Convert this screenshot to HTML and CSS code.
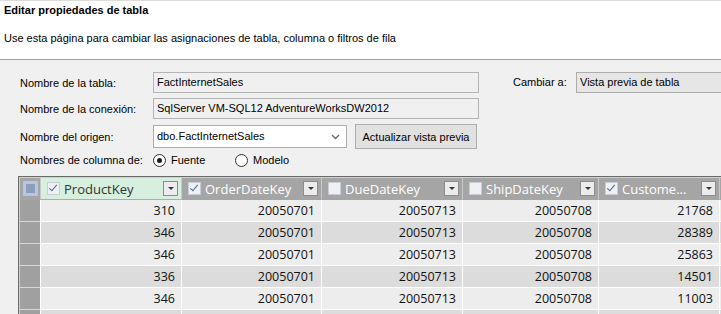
FILE: index.html
```html
<!DOCTYPE html>
<html lang="es">
<head>
    <meta charset="UTF-8">
    <title>Editar propiedades de tabla</title>
    <link rel="stylesheet" href="styles.css">
</head>
<body>
    <div class="header">
        <div class="title">Editar propiedades de tabla</div>
        <div class="subtitle">Use esta página para cambiar las asignaciones de tabla, columna o filtros de fila</div>
    </div>

    <div class="form">
        <div class="fields">
            <div class="row">
                <span class="lbl">Nombre de la tabla:</span>
                <div class="box wide">FactInternetSales</div>
            </div>
            <div class="row">
                <span class="lbl">Nombre de la conexión:</span>
                <div class="box wide">SqlServer VM-SQL12 AdventureWorksDW2012</div>
            </div>
            <div class="row tall">
                <span class="lbl">Nombre del origen:</span>
                <div class="box combo">
                    <span>dbo.FactInternetSales</span>
                    <svg class="chev" width="9" height="6" viewBox="0 0 9 6"><path d="M1 1 L4.5 4.5 L8 1" fill="none" stroke="#666" stroke-width="1.3"/></svg>
                </div>
                <button class="btn">Actualizar vista previa</button>
            </div>
            <div class="row radios">
                <span class="lbl">Nombres de columna de:</span>
                <span class="radio on"></span><span class="rtext">Fuente</span>
                <span class="radio"></span><span class="rtext">Modelo</span>
            </div>
        </div>
        <div class="switch">
            <span class="lbl">Cambiar a:</span>
            <div class="box select">Vista previa de tabla</div>
        </div>
    </div>

    <div class="grid-wrap">
        <table class="grid">
            <thead>
                <tr>
                    <th class="corner"><span class="all"></span></th>
                    <th class="c1 active"><div class="hd"><span class="chk on"></span><span class="name">ProductKey</span><span class="dd"></span></div></th>
                    <th class="c2"><div class="hd"><span class="chk on"></span><span class="name">OrderDateKey</span><span class="dd"></span></div></th>
                    <th class="c3"><div class="hd"><span class="chk"></span><span class="name">DueDateKey</span><span class="dd"></span></div></th>
                    <th class="c4"><div class="hd"><span class="chk"></span><span class="name">ShipDateKey</span><span class="dd"></span></div></th>
                    <th class="c5"><div class="hd"><span class="chk on"></span><span class="name">Custome...</span><span class="dd"></span></div></th>
                    <th class="c6"></th>
                </tr>
            </thead>
            <tbody>
                <tr><td class="sel"></td><td>310</td><td>20050701</td><td>20050713</td><td>20050708</td><td>21768</td><td></td></tr>
                <tr><td class="sel"></td><td>346</td><td>20050701</td><td>20050713</td><td>20050708</td><td>28389</td><td></td></tr>
                <tr><td class="sel"></td><td>346</td><td>20050701</td><td>20050713</td><td>20050708</td><td>25863</td><td></td></tr>
                <tr><td class="sel"></td><td>336</td><td>20050701</td><td>20050713</td><td>20050708</td><td>14501</td><td></td></tr>
                <tr><td class="sel"></td><td>346</td><td>20050701</td><td>20050713</td><td>20050708</td><td>11003</td><td></td></tr>
                <tr><td class="sel"></td><td></td><td></td><td></td><td></td><td></td><td></td></tr>
            </tbody>
        </table>
    </div>
</body>
</html>
```

FILE: styles.css
```css
body {
    margin: 0;
    background: #f0f0f0;
    font-family: 'Liberation Sans', Arial, sans-serif;
    font-size: 11px;
    color: #000;
    overflow: hidden;
    width: 721px;
    height: 314px;
}

.header {
    height: 58px;
    background: #fff;
    border-top: 1px solid #dcdcdc;
    border-bottom: 1px solid #a0a0a0;
    padding-left: 4px;
}

.title {
    font-weight: bold;
    line-height: 16px;
    margin-top: 1px;
}

.subtitle {
    line-height: 16px;
    margin-top: 12px;
}

.form {
    display: flex;
    padding: 12px 0 0 20px;
    height: 104px;
}

.fields {
    width: 493px;
    flex: none;
}

.row {
    display: flex;
    align-items: center;
    height: 21px;
    margin-bottom: 5px;
}

.row.tall {
    height: 25px;
    margin-bottom: 3px;
}

.lbl {
    width: 133px;
    flex: none;
    white-space: nowrap;
}

.box {
    height: 19px;
    line-height: 19px;
    border: 1px solid #b4b4b4;
    background: #f0f0f0;
    padding-left: 3px;
    box-sizing: content-box;
    white-space: nowrap;
}

.wide {
    width: 321px;
}

.combo {
    width: 187px;
    height: 21px;
    line-height: 21px;
    background: #fff;
    border-color: #adadad;
    display: flex;
    justify-content: space-between;
    align-items: center;
    padding-right: 2px;
}

.chev {
    margin-right: 4px;
}

.btn {
    margin-left: 8px;
    height: 25px;
    width: 122px;
    padding: 0;
    border: 1px solid #adadad;
    background: #e1e1e1;
    font-family: inherit;
    font-size: 11px;
    color: #000;
}

.radios {
    height: 16px;
}

.radio {
    width: 11px;
    height: 11px;
    border: 1px solid #333;
    border-radius: 50%;
    background: #fff;
    position: relative;
    flex: none;
}

.radio.on::after {
    content: '';
    position: absolute;
    left: 3px;
    top: 3px;
    width: 5px;
    height: 5px;
    border-radius: 50%;
    background: #1a1a1a;
}

.rtext {
    margin-left: 5px;
    width: 64px;
}

.switch {
    display: flex;
    align-items: flex-start;
    height: 21px;
}

.switch .lbl {
    width: 63px;
    line-height: 21px;
}

.select {
    width: 200px;
    background: #e6e6e6;
    border-color: #acacac;
}

.grid-wrap {
    margin-left: 18px;
    border-top: 1px solid #6a6a6a;
    border-left: 1px solid #6a6a6a;
    padding: 1px 0 0 1px;
    background: #d0d0d0;
    width: 720px;
}

.grid {
    width: 720px;
    border-collapse: separate;
    border-spacing: 0;
    table-layout: fixed;
    font-family: 'Open Sans', sans-serif;
    font-size: 13px;
}

.grid th,
.grid td {
    border-right: 1px solid #fff;
    border-bottom: 1px solid #fff;
    padding: 0;
    white-space: nowrap;
    overflow: hidden;
}

.grid th {
    height: 21px;
    background: #a5a5a5;
    color: #fff;
    font-weight: normal;
    text-align: left;
    border-right-color: #c8c8c8;
    border-bottom-color: #a5a5a5;
}

.grid th.active {
    background: #d6efdf;
    color: #333;
    border-bottom-color: #7bc89a;
}

.corner { width: 20px; }
.c1 { width: 140px; }
.c2 { width: 139px; }
.c3 { width: 140px; }
.c4 { width: 135px; }
.c5 { width: 120px; }
.c6 { width: 19px; }

.all {
    display: block;
    width: 13px;
    height: 13px;
    margin-left: 3px;
    border: 1px solid #c4c4c4;
    background: #8a9fc0;
    box-shadow: inset 0 0 0 2px #b9c8de;
}

.hd {
    display: flex;
    align-items: center;
    height: 21px;
    padding-left: 6px;
}

.chk {
    width: 11px;
    height: 11px;
    border: 1px solid #c7ccd6;
    background: #eef0f4;
    flex: none;
    position: relative;
}

.chk.on::after {
    content: '';
    position: absolute;
    left: 3px;
    top: 0;
    width: 3px;
    height: 7px;
    border-right: 1.5px solid #4d6894;
    border-bottom: 1.5px solid #4d6894;
    transform: rotate(40deg);
}

.name {
    margin-left: 4px;
    flex: 1;
    overflow: hidden;
}

.dd {
    width: 13px;
    height: 13px;
    border: 1px solid #8c8c8c;
    background: #ececec;
    margin-right: 3px;
    flex: none;
    position: relative;
}

.dd::after {
    content: '';
    position: absolute;
    left: 4px;
    top: 5px;
    border-left: 3px solid transparent;
    border-right: 3px solid transparent;
    border-top: 3px solid #2b3a57;
}

.grid td {
    height: 21px;
    background: #ededed;
    text-align: right;
    padding-right: 6px;
    color: #111;
    font-size: 12.5px;
}

.grid tbody tr:nth-child(even) td {
    background: #dcdcdc;
}

.grid td.sel,
.grid tbody tr:nth-child(even) td.sel {
    background: #a0a0a0;
    padding: 0;
    border-bottom-color: #d8d8d8;
}
```
